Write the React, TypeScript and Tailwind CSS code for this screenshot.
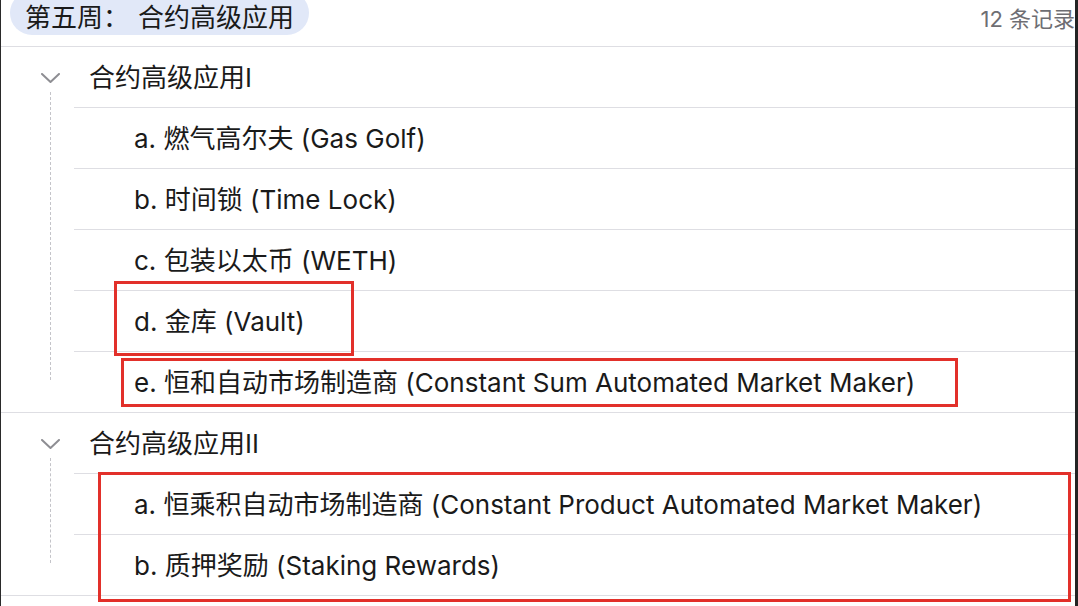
const groups = [
  {
    title: '合约高级应用I',
    items: [
      'a. 燃气高尔夫 (Gas Golf)',
      'b. 时间锁 (Time Lock)',
      'c. 包装以太币 (WETH)',
      'd. 金库 (Vault)',
      'e. 恒和自动市场制造商 (Constant Sum Automated Market Maker)',
    ],
  },
  {
    title: '合约高级应用II',
    items: [
      'a. 恒乘积自动市场制造商 (Constant Product Automated Market Maker)',
      'b. 质押奖励 (Staking Rewards)',
    ],
  },
];

const Chevron = () => (
  <svg width="19" height="10" viewBox="0 0 19 10" fill="none">
    <polyline points="1,1 9.5,9 18,1" stroke="#8e8e93" strokeWidth="2" strokeLinecap="round" strokeLinejoin="round" />
  </svg>
);

const Group = ({ title, items }: { title: string; items: string[] }) => (
  <div className="relative border-b border-[#dedee3]">
    <div className="flex h-[60px] items-center">
      <div className="flex w-[88px] pl-[40px] pt-[1px]">
        <Chevron />
      </div>
      <span className="text-[26px] text-[#1a1a1a]">{title}</span>
    </div>
    <div className="absolute left-[49px] top-[45px] bottom-[32px] border-l-[1.5px] border-dashed border-[#c4c4c9]" />
    {items.map((item) => (
      <div key={item} className="ml-[73px] flex h-[61px] items-center border-t border-[#dedee3] pl-[60px]">
        <span className="text-[26px] text-[#1a1a1a]">{item}</span>
      </div>
    ))}
  </div>
);

export default function App() {
  return (
    <div
      className="relative flex h-[606px] w-[1078px] overflow-hidden bg-white"
      style={{ fontFamily: 'Inter, "Noto Sans CJK SC", sans-serif' }}
    >
      <div className="w-[1px] bg-[#2a2a2a]" />
      <div className="flex-1">
        <div className="flex h-[47px] items-start justify-between border-b border-[#dedee3]">
          <div className="-mt-[9px] ml-[9px] flex h-[44px] items-center whitespace-nowrap rounded-full bg-[#e1e8f8] px-[15px] pt-[8px] text-[26px] text-[#1a1a1a]">
            第五周：<span className="ml-[9px]">合约高级应用</span>
          </div>
          <div className="mt-[3px] whitespace-nowrap text-[22px] text-[#6e6e73]">12 条记录</div>
        </div>
        {groups.map((g) => (
          <Group key={g.title} title={g.title} items={g.items} />
        ))}
      </div>
      <div className="w-[3px] bg-[#232323]" />

      <div className="absolute left-[114px] top-[281px] h-[75px] w-[240px] border-[3px] border-[#e2302a]" />
      <div className="absolute left-[121px] top-[358px] h-[49px] w-[837px] border-[3px] border-[#e2302a]" />
      <div className="absolute left-[98px] top-[472px] h-[130px] w-[973px] border-[3px] border-[#e2302a]" />
    </div>
  );
}
